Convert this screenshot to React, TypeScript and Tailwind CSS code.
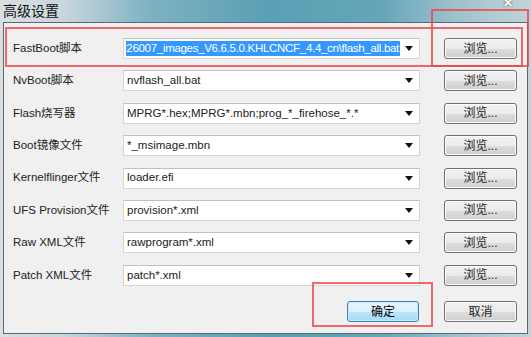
import React from "react";

const rows: { label: string; value: string; selected?: boolean }[] = [
  { label: "FastBoot脚本", value: "D:\\images\\e26007_images_V6.6.5.0.KHLCNCF_4.4_cn\\flash_all.bat", selected: true },
  { label: "NvBoot脚本", value: "nvflash_all.bat" },
  { label: "Flash烧写器", value: "MPRG*.hex;MPRG*.mbn;prog_*_firehose_*.*" },
  { label: "Boot镜像文件", value: "*_msimage.mbn" },
  { label: "Kernelflinger文件", value: "loader.efi" },
  { label: "UFS Provision文件", value: "provision*.xml" },
  { label: "Raw XML文件", value: "rawprogram*.xml" },
  { label: "Patch XML文件", value: "patch*.xml" },
];

const font = { fontFamily: '"Liberation Sans", "Noto Sans CJK SC", sans-serif' };

function Arrow() {
  return (
    <svg width="8" height="5" viewBox="0 0 8 5" className="shrink-0">
      <path d="M0 0 L8 0 L4 5 Z" fill="#111" />
    </svg>
  );
}

function Btn({ children, primary }: { children: React.ReactNode; primary?: boolean }) {
  return (
    <div
      className={
        primary
          ? "w-[72px] h-[21px] rounded-[3px] border border-[#3c7fb1] bg-[linear-gradient(#eaf6fd_0%,#d9f0fc_50%,#bee6fd_51%,#a7d9f5_100%)] shadow-[inset_0_0_0_1px_#c8ecfd] flex items-center justify-center text-[12px] text-black"
          : "w-[73px] h-[21px] rounded-[3px] border border-[#707070] bg-[linear-gradient(#f2f2f2_0%,#ebebeb_50%,#dddddd_51%,#cfcfcf_100%)] shadow-[inset_0_0_0_1px_#fcfcfc] flex items-center justify-center text-[12px] text-[#222]"
      }
    >
      {children}
    </div>
  );
}

export default function App() {
  return (
    <div
      className="relative w-[531px] h-[337px] overflow-hidden flex flex-col bg-[linear-gradient(90deg,#d9dfe3_0%,#c9d6dc_12%,#7fb2c2_28%,#5b9fb4_50%,#65a6b9_72%,#9fc2cd_86%,#c3d3d8_100%)]"
      style={font}
    >
      {/* title bar */}
      <div className="h-[22px] shrink-0 flex items-center pl-[3px] relative">
        <span className="text-[14px] leading-none text-[#111] mt-[-1px]">高级设置</span>
        <span className="absolute left-[503px] top-[-4px] text-[12px] leading-[14px] text-white font-bold [text-shadow:0_0_2px_#333]">✕</span>
      </div>

      {/* client area */}
      <div className="ml-[3px] mr-[3px] mb-[3px] flex-1 border border-[#5a6670] bg-[#f0f0f0] flex flex-col pt-[15px] pl-[9px] pr-[10px]">
        <div className="flex flex-col">
          {rows.map((r) => (
            <div key={r.label} className="h-[32.4px] flex items-start">
              <div className="w-[110px] h-[21px] flex items-center text-[11.5px] text-[#222] whitespace-nowrap">
                {r.label}
              </div>
              <div className="w-[297px] h-[21px] bg-white border border-[#d5d5d5] border-t-[#c0c0c0] flex items-center pl-[2px] pr-[5px]">
                <div className="flex-1 overflow-hidden flex justify-end min-w-0">
                  {r.selected ? (
                    <span className="whitespace-nowrap text-[11.5px] leading-[15px] bg-[#3399ff] text-white pr-[1px] tracking-[-0.3px]">
                      {r.value}
                    </span>
                  ) : (
                    <span className="w-full whitespace-nowrap text-[11.5px] text-[#222] pl-[1px]">{r.value}</span>
                  )}
                </div>
                <div className="w-[14px] flex justify-end pr-[1px]">
                  <Arrow />
                </div>
              </div>
              <div className="ml-[24px]">
                <Btn>浏览...</Btn>
              </div>
            </div>
          ))}
        </div>
        <div className="flex justify-end mt-[4px] gap-[25px]">
          <Btn primary>确定</Btn>
          <Btn>取消</Btn>
        </div>
      </div>

      {/* red annotation boxes */}
      <div className="absolute left-[5px] top-[27px] w-[518px] h-[40px] border-2 border-[#e8474b]/80 pointer-events-none" />
      <div className="absolute left-[431px] top-[9px] w-[98px] h-[58px] border-2 border-[#e8474b]/80 pointer-events-none" />
      <div className="absolute left-[312px] top-[282px] w-[121px] h-[45px] border-2 border-[#e8474b]/80 pointer-events-none" />
    </div>
  );
}
